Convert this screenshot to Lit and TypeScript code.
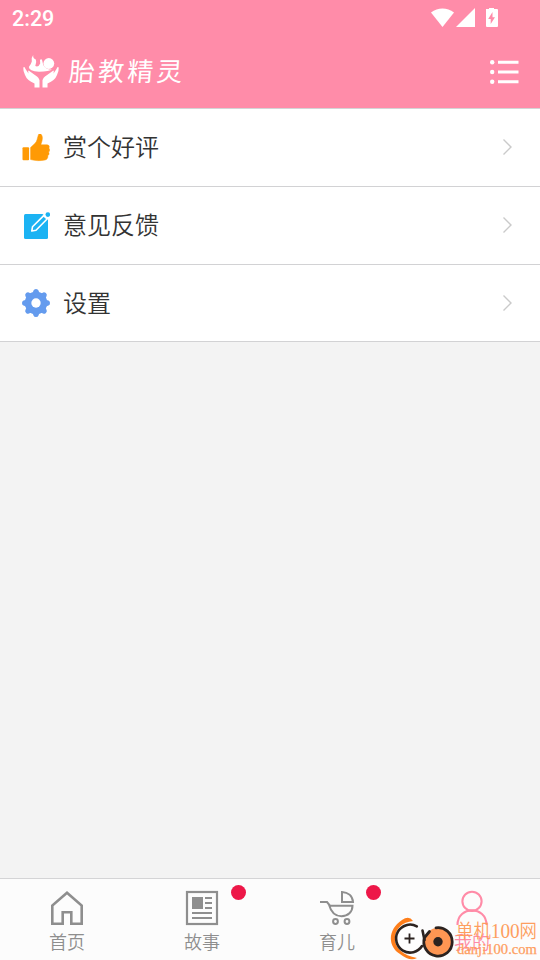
import { LitElement, html, svg, css } from "lit";
import { customElement } from "lit/decorators.js";

const thumb = svg`<svg width="28" height="28" viewBox="0 0.8 28 28" fill="#ff9a05"><rect x=".5" y="14" width="6.600" height="13" rx="1"/><path d="M8.600 26.300V14.200l4.500-4.100c2.100-2 2.200-5.700 3.300-8.400.5-1.300 1.700-1.500 2.600-.7 2 1.900 1.600 5.800.2 9.400-.3.8 0 1.200.8 1.200h5c2.100 0 2.800 1.900 1.800 3.300 1.300 1.300 1.100 3-.2 4 .9 1.400.4 2.900-.8 3.500.4 2.500-1 4-3 4.500-4.500.8-9.700.8-14.200-.6z" stroke="#ff9a05" stroke-width=".5"/></svg>`;
const edit = svg`<svg width="28" height="28" viewBox="0 1 28 28"><rect x="2" y="3" width="24" height="25" rx="1.500" fill="#1cb3f3"/><path d="M20.500 4L24 1h4v5l-2.500 2.500z" fill="#fff"/><path d="M9.800 20l.7-4.200L21.700 4.600l3.400 3.400L14 19.200z" fill="#1cb3f3" stroke="#fff" stroke-width="1.600" stroke-linejoin="round"/><path d="M23.500 4.200l3 3" stroke="#fff"/><circle cx="25.800" cy="3.600" r="2.300" fill="#1cb3f3"/></svg>`;
const gear = svg`<svg width="28" height="28" viewBox="-14 -14 28 28"><g fill="#649bee"><circle r="11.200"/>${[0, 45, 90, 135, 180, 225, 270, 315].map(
  (a) => svg`<path transform="rotate(${a})" d="M-4.600-9.500Q-2.900-10-2.500-12.500Q-2-14 0-14Q2-14 2.500-12.500Q2.900-10 4.600-9.500z"/>`
)}</g><circle r="4.700" fill="#fff"/></svg>`;

const home = svg`<svg width="36" height="36" viewBox="0 0 36 36" fill="none" stroke="#8e8e8e" stroke-width="2.600"><path d="M3.300 33.700V15.500L18 2.800l14.700 12.700v18.200H22.300V22.300h-8.600v11.400z"/></svg>`;
const news = svg`<svg width="36" height="36" viewBox="0 0 36 36" fill="none" stroke="#8e8e8e" stroke-width="2"><rect x="3" y="2" width="30" height="32" stroke-width="2.200"/><path d="M8 7h11v12H8z" fill="#8e8e8e" stroke="none"/><path d="M21 8h7M21 13h7M21 18h7M8 23h20M8 28h20"/></svg>`;
const pram = svg`<svg width="36" height="36" viewBox="0 0 36 36" fill="none" stroke="#8e8e8e" stroke-width="2"><path d="M1 12h7l3 3.700h22.500c0 6.300-4.500 10.500-11 10.500-6.500 0-10.500-4.200-12.500-11.500M23 12V2c6 .3 10.500 4 11 10z"/><circle cx="16.500" cy="31.500" r="2.400"/><circle cx="28" cy="31.500" r="2.400"/></svg>`;
const user = svg`<svg width="36" height="36" viewBox="0 0 36 36" fill="none" stroke="#ff8ba7" stroke-width="2.100"><circle cx="18" cy="11.300" r="9.600"/><path d="M3.500 35C3.500 15.500 32.500 15.500 32.500 35"/></svg>`;

@customElement("app-root")
export class AppRoot extends LitElement {
  static styles = css`
    :host {
      display: flex;
      flex-direction: column;
      position: relative;
      height: 960px;
      overflow: hidden;
      background: #f3f3f3;
      font-family: "Noto Sans CJK SC", sans-serif;
      font-weight: 350;
    }
    svg { display: block; flex: none; }
    header {
      height: 108px;
      background: #ff8ca9;
      color: #fff;
      border-bottom: 1px solid #d4d4d6;
    }
    .status {
      display: flex;
      height: 36px;
      padding: 0 41px 0 12px;
      align-items: center;
      justify-content: space-between;
    }
    .time { font: 500 21.500px/36px Roboto, sans-serif; padding-top: 1px; }
    .bar {
      display: flex;
      height: 72px;
      align-items: center;
      padding: 0 20px 0 23px;
    }
    .title {
      flex: 1;
      margin: 0 0 4px 10px;
      font-size: 26px;
      font-weight: 400;
      line-height: 36px;
      letter-spacing: 3.200px;
      transform: skewX(-4deg);
    }
    .row {
      display: flex;
      align-items: center;
      height: 77px;
      padding: 0 27px 0 22px;
      background: #fff;
      border-bottom: 1px solid #d2d2d4;
      color: #333;
      font-size: 24px;
    }
    .row:last-child { height: 76px; }
    .label { flex: 1; margin: 0 0 3px 13px; line-height: 36px; }
    .arrow { margin-bottom: 1px; }
    main { flex: 1; }
    nav {
      display: grid;
      grid-template-columns: repeat(4, 1fr);
      height: 81px;
      background: #fcfcfc;
      border-top: 1px solid #d4d4d6;
    }
    .tab {
      position: relative;
      display: flex;
      flex-direction: column;
      align-items: center;
      padding: 11px 1px 0 0;
      color: #8e8e8e;
      font-size: 18px;
      line-height: 30px;
    }
    .on { color: #ff8ba7; }
    .dot {
      position: absolute;
      left: 96px;
      top: 6px;
      width: 15px;
      height: 15px;
      border-radius: 50%;
      background: #ed1748;
    }
    .mark { position: absolute; right: 0; bottom: 0; opacity: .95; }
    .markname { font: 350 19px "Noto Sans CJK SC", sans-serif; }
    .digits { font: 21px "Liberation Serif", serif; }
    .marksite { font: 14.500px "Liberation Serif", serif; stroke: #ff9a57; stroke-width: .25px; }
  `;

  row(icon: unknown, label: string) {
    return html`<div class="row">${icon}<span class="label">${label}</span>
      <svg class="arrow" width="11" height="18" viewBox="0 0 11 18" fill="none" stroke="#cacaca" stroke-width="1.400"><path d="M1.500 1.500L9 9l-7.500 7.500"/></svg></div>`;
  }

  tab(icon: unknown, label: string, dot = false, on = false) {
    return html`<div class="tab ${on ? "on" : ""}">${icon}<span>${label}</span>${dot ? html`<i class="dot"></i>` : ""}</div>`;
  }

  render() {
    return html`
      <header>
        <div class="status">
          <span class="time">2:29</span>
          <svg width="68" height="20" viewBox="0 0 68 20" fill="#fff">
            <path d="M0 4.500C7-.8 16-.8 23 4.500L11.500 19z"/>
            <path d="M25 19L44 0v19z"/>
            <path d="M55 1h3V-1h5v2h3q1 0 1 1v16q0 1-1 1H56q-1 0-1-1z"/>
            <path d="M61.500 4v5.200h2.500L59.700 16v-5h-2.500z" fill="#ff8ca9"/>
          </svg>
        </div>
        <div class="bar">
          <svg width="36" height="34" viewBox="0 0 36 34" fill="#fff">
            <circle cx="25.800" cy="8.500" r="5.400"/>
            <path d="M5.800 12Q8 9.500 8.800 6.500Q7.800 3 10.200 0Q9.800 3.500 12.800 4.500Q14 7 12.300 11Q15.500 12.500 17.200 8.500L17 5Q18.500 3.500 19.200 5.500L20 9Q21 12.500 25 14Q28 15 29.800 14Q26 16.800 16 16.800Q6 16 5.800 12z"/>
            <path d="M.3 12.500Q1.500 11 2.500 14L5.500 18.500Q4.500 14.500 6.300 16L14 21.500Q17 24 16.500 27V32.500H11.500V28.500Q4 25.500 2 20Q0 16 .3 12.500z"/>
            <path d="M35.700 12.500Q34.500 11 33.500 14L30.500 18.500Q31.500 14.500 29.700 16L22 21.500Q19 24 19.500 27V32.500H24.500V28.500Q32 25.500 34 20Q36 16 35.700 12.500z"/>
          </svg>
          <span class="title">胎教精灵</span>
          <svg width="30" height="26" viewBox="0 0 30 26" fill="#fff">
            <circle cx="2.200" cy="3.300" r="2.200"/><circle cx="2.200" cy="13" r="2.200"/><circle cx="2.200" cy="22.700" r="2.200"/>
            <path d="M8 1.800h20.500v3H8zM8 11.500h20.500v3H8zM8 21.200h20.500v3H8z"/>
          </svg>
        </div>
      </header>
      <section>
        ${this.row(thumb, "赏个好评")}
        ${this.row(edit, "意见反馈")}
        ${this.row(gear, "设置")}
      </section>
      <main></main>
      <nav>
        ${this.tab(home, "首页")}
        ${this.tab(news, "故事", true)}
        ${this.tab(pram, "育儿", true)}
        ${this.tab(user, "我的", false, true)}
      </nav>
      <svg class="mark" width="152" height="46" viewBox="388 914 152 46" fill="none">
        <path d="M413 921Q409 915 402 920C388 929 387 946 400 954Q410 962 417 958C402 955 394 947 395 937C396 928 402 922.500 413 921z" fill="#ff780f"/>
        <circle cx="410" cy="938.700" r="14.500" fill="#fff"/>
        <path d="M416.800 926.300A14 14 0 1 0 422 946" stroke="#211815" stroke-width="2.600" stroke-linecap="round"/>
        <path d="M404.500 938.500h10M409.500 933.500v10" stroke="#211815" stroke-width="1.800"/>
        <circle cx="438.300" cy="941.700" r="14" fill="#ff914b"/>
        <path d="M436 927.800A14.200 14.200 0 1 1 424.500 937.500L429.500 931.500" stroke="#211815" stroke-width="2.800" stroke-linecap="round"/>
        <path d="M422.500 930.500L424.500 940" stroke="#211815" stroke-width="2.600" stroke-linecap="round"/>
        <circle cx="438" cy="941.800" r="4.700" fill="#211815"/>
        <g fill="#ff9a57">
          <text class="markname" x="456" y="937.500" textLength="81" lengthAdjust="spacingAndGlyphs">单机<tspan class="digits">100</tspan>网</text>
          <text class="marksite" x="457" y="953.500" textLength="80" lengthAdjust="spacingAndGlyphs">danji100.com</text>
        </g>
      </svg>
    `;
  }
}
